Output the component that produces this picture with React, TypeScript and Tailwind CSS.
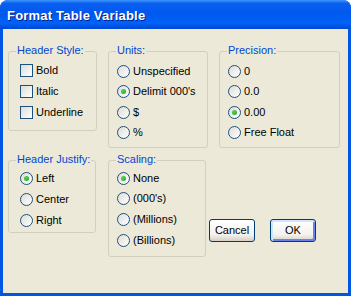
import React from 'react'

type GroupProps = {
  label: string
  className: string
  children: React.ReactNode
}

function Group({ label, className, children }: GroupProps) {
  return (
    <div className={`relative border border-[#d0d0bf] rounded-[3px] flex flex-col ${className}`}>
      <span className="absolute left-[7px] top-[-8px] px-[1px] bg-[#ece9d8] text-[#0046d5] leading-[13px]">
        {label}
      </span>
      {children}
    </div>
  )
}

function Check({ label, h = 'h-[21px]' }: { label: string; h?: string }) {
  return (
    <div className={`flex items-center gap-[3px] ${h}`}>
      <span className="w-[13px] h-[13px] border border-[#1c5180] bg-[linear-gradient(135deg,#dcdcd7,#ffffff)]" />
      <span className="leading-[13px]">{label}</span>
    </div>
  )
}

function Radio({ label, checked = false, h }: { label: string; checked?: boolean; h: string }) {
  return (
    <div className={`flex items-center gap-[3px] ${h}`}>
      <span className="w-[13px] h-[13px] rounded-full border border-[#1c5180] bg-[linear-gradient(135deg,#dcdcd7,#ffffff)] flex items-center justify-center">
        {checked && <span className="w-[5px] h-[5px] rounded-full bg-[radial-gradient(circle_at_35%_35%,#55d455,#21a121)]" />}
      </span>
      <span className="leading-[13px]">{label}</span>
    </div>
  )
}

export default function App() {
  return (
    <div className="w-[351px] h-[296px] bg-[#0055e5] rounded-t-[8px] overflow-hidden flex flex-col font-['Liberation_Sans',Arial,sans-serif] text-[11px] text-black">
      {/* caption */}
      <div className="h-[29px] shrink-0 flex items-center pl-[7px] pt-[2px] bg-[linear-gradient(180deg,#3d95ff_0%,#0a5fef_12%,#0058ee_45%,#0062f7_80%,#0048d2_100%)]">
        <span className="text-white font-bold text-[13px] tracking-[0.2px] leading-[16px] [text-shadow:1px_1px_0_#0a1e8a]">
          Format Table Variable
        </span>
      </div>

      {/* client area */}
      <div className="flex-1 mx-[3px] mb-[3px] bg-[#ece9d8] pl-[5px] pt-[22px]">
        <div className="flex items-start">
          <Group label="Header Style:" className="w-[89px] h-[80px] pl-[11px] pt-[8px]">
            <Check label="Bold" />
            <Check label="Italic" />
            <Check label="Underline" />
          </Group>
          <Group label="Units:" className="ml-[11px] w-[100px] h-[97px] pl-[8px] pt-[9px]">
            <Radio label="Unspecified" h="h-[20.5px]" />
            <Radio label="Delimit 000's" checked h="h-[20.5px]" />
            <Radio label="$" h="h-[20.5px]" />
            <Radio label="%" h="h-[20.5px]" />
          </Group>
          <Group label="Precision:" className="ml-[11px] w-[121px] h-[97px] pl-[8px] pt-[9px]">
            <Radio label="0" h="h-[20.5px]" />
            <Radio label="0.0" h="h-[20.5px]" />
            <Radio label="0.00" checked h="h-[20.5px]" />
            <Radio label="Free Float" h="h-[20.5px]" />
          </Group>
        </div>

        <div className="flex items-start mt-[12px]">
          <Group label="Header Justify:" className="w-[88px] h-[73px] pl-[11px] pt-[7px]">
            <Radio label="Left" checked h="h-[21px]" />
            <Radio label="Center" h="h-[21px]" />
            <Radio label="Right" h="h-[21px]" />
          </Group>
          <Group label="Scaling:" className="ml-[12px] w-[98px] h-[97px] pl-[8px] pt-[7px]">
            <Radio label="None" checked h="h-[20.67px]" />
            <Radio label="(000's)" h="h-[20.67px]" />
            <Radio label="(Millions)" h="h-[20.67px]" />
            <Radio label="(Billions)" h="h-[20.67px]" />
          </Group>
          <div className="flex mt-[59px] ml-[3px] gap-[15px]">
            <button className="w-[46px] h-[23px] border border-[#003c74] rounded-[3px] bg-[linear-gradient(180deg,#ffffff,#f3f2ee_70%,#d6d0c5)] leading-[13px]">
              Cancel
            </button>
            <button className="w-[46px] h-[23px] border border-[#003c74] rounded-[3px] bg-[linear-gradient(180deg,#ffffff,#f3f2ee_70%,#d6d0c5)] shadow-[inset_1px_1px_0_1px_#cee7ff,inset_-1px_-1px_0_1px_#6982ee] leading-[13px]">
              OK
            </button>
          </div>
        </div>
      </div>
    </div>
  )
}
